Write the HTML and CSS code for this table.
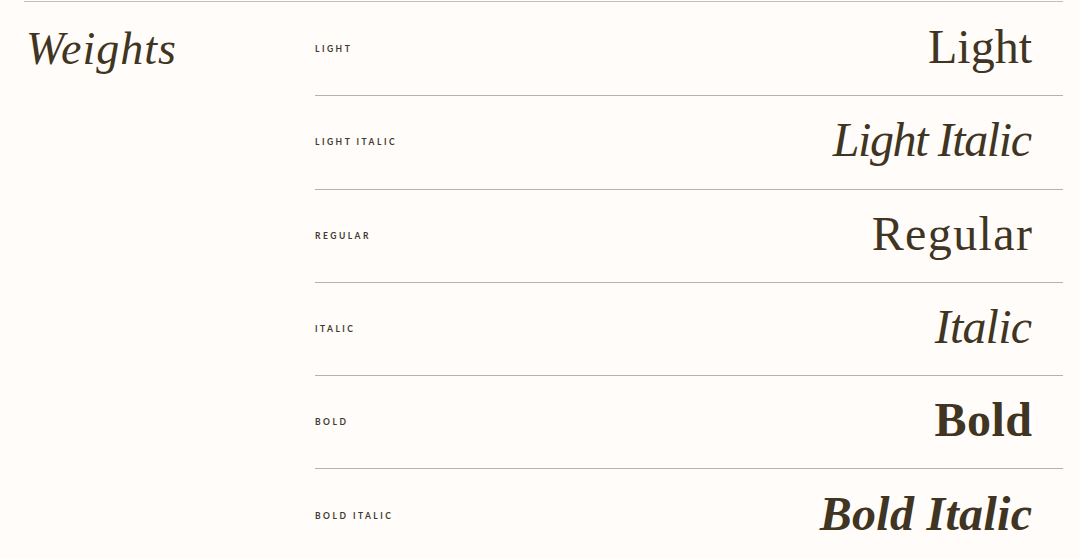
FILE: index.html
```html
<!DOCTYPE html>
<html>
<head>
<meta charset="utf-8">
<link rel="stylesheet" href="styles.css">
</head>
<body>
<section class="weights">
  <h2 class="title">Weights</h2>
  <div class="list">
    <div class="row"><span class="label">Light</span><span class="sample s-light">Light</span></div>
    <div class="row"><span class="label">Light Italic</span><span class="sample s-light-italic">Light Italic</span></div>
    <div class="row"><span class="label">Regular</span><span class="sample s-regular">Regular</span></div>
    <div class="row"><span class="label">Italic</span><span class="sample s-italic">Italic</span></div>
    <div class="row"><span class="label">Bold</span><span class="sample s-bold">Bold</span></div>
    <div class="row"><span class="label">Bold Italic</span><span class="sample s-bold-italic">Bold Italic</span></div>
  </div>
</section>
</body>
</html>
```

FILE: styles.css
```css
html, body {
  margin: 0;
  padding: 0;
  background: #fffcf9;
  color: #3f3522;
}
body {
  padding: 1px 17px 0 24px;
  overflow: hidden;
  height: 558px;
  box-sizing: border-box;
}
.weights {
  display: flex;
  border-top: 1px solid #c2c0bd;
}
.title {
  width: 291px;
  box-sizing: border-box;
  flex: none;
  margin: 0;
  padding: 21px 0 0 2px;
  font-family: "Liberation Serif", serif;
  font-style: italic;
  font-weight: 400;
  font-size: 46px;
  line-height: 52px;
  letter-spacing: 1px;
}
.list {
  flex: 1;
  display: flex;
  flex-direction: column;
  padding-top: 1px;
}
.row {
  height: 93.3px;
  box-sizing: border-box;
  flex: none;
  display: flex;
  align-items: center;
  justify-content: space-between;
  padding-right: 31px;
  border-bottom: 1px solid #b4b2af;
}
.row:last-child {
  border-bottom: none;
}
.label {
  font-family: "Lato", sans-serif;
  font-weight: 700;
  font-size: 8.5px;
  letter-spacing: 2.5px;
  text-transform: uppercase;
  color: #3f3a30;
}
.sample {
  font-family: "Liberation Serif", serif;
  font-size: 48px;
  line-height: 48px;
  padding-bottom: 4px;
}
.s-light { font-weight: 400; }
.s-light-italic {
  font-weight: 400;
  font-style: italic;
  letter-spacing: -1.4px;
  margin-right: 1.4px;
}
.s-regular {
  font-weight: 400;
  letter-spacing: 1.4px;
  margin-right: -1.4px;
}
.s-italic {
  font-weight: 400;
  font-style: italic;
  letter-spacing: -0.8px;
  margin-right: 0.8px;
}
.s-bold { font-weight: 700; letter-spacing: 0.5px; margin-right: -0.5px; }
.s-bold-italic { font-weight: 700; font-style: italic; letter-spacing: 0.3px; margin-right: -0.3px; }
```
